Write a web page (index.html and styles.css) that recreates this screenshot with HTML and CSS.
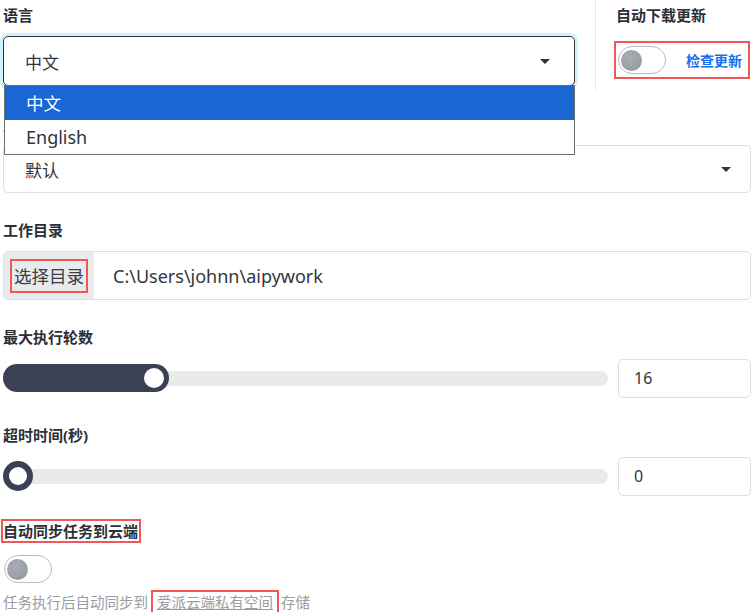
FILE: index.html
```html
<!DOCTYPE html>
<html lang="zh-CN">
<head>
    <meta charset="UTF-8">
    <meta name="viewport" content="width=device-width, initial-scale=1.0">
    <title>设置</title>
    <link rel="stylesheet" href="styles.css">
</head>
<body>
<div class="page">

    <div class="top-row">
        <div class="col-main">
            <div class="label">语言</div>
            <div class="select focused">
                <span>中文</span>
                <span class="caret"></span>
                <ul class="dropdown">
                    <li class="active">中文</li>
                    <li class="latin">English</li>
                </ul>
            </div>
        </div>
        <div class="col-side">
            <div class="label">自动下载更新</div>
            <div class="update-box">
                <span class="switch"><span class="knob"></span></span>
                <a class="check-link" href="#">检查更新</a>
            </div>
        </div>
    </div>

    <div class="field field-theme">
        <div class="label">主题</div>
        <div class="select select-sm">
            <span>默认</span>
            <span class="caret"></span>
        </div>
    </div>

    <div class="field">
        <div class="label">工作目录</div>
        <div class="input-group">
            <div class="addon"><span class="marked">选择目录</span></div>
            <div class="path">C:\Users\johnn\aipywork</div>
        </div>
    </div>

    <div class="field">
        <div class="label">最大执行轮数</div>
        <div class="slider-row">
            <div class="slider">
                <div class="track"></div>
                <div class="fill" style="width: 166px;"><span class="thumb"></span></div>
            </div>
            <div class="num-input">16</div>
        </div>
    </div>

    <div class="field">
        <div class="label">超时时间(秒)</div>
        <div class="slider-row">
            <div class="slider">
                <div class="track"></div>
                <div class="fill fill-min" style="width: 30px;"><span class="thumb"></span></div>
            </div>
            <div class="num-input">0</div>
        </div>
    </div>

    <div class="field field-sync">
        <div class="label"><span class="marked-title">自动同步任务到云端</span></div>
        <span class="switch"><span class="knob"></span></span>
        <p class="caption">任务执行后自动同步到<span class="marked-link"><a href="#">爱派云端私有空间</a></span>存储</p>
    </div>

</div>
</body>
</html>
```

FILE: styles.css
```css
html, body {
    margin: 0;
    padding: 0;
    background: #fff;
    overflow: hidden;
}
body {
    font-family: "Noto Sans", "Noto Sans CJK SC", sans-serif;
    color: #2f333a;
    padding-left: 3px;
}
.page {
    width: 748px;
}

.label {
    font-size: 15px;
    font-weight: bold;
    line-height: 20px;
    height: 20px;
    margin-bottom: 11px;
    color: #2b2f36;
}

/* верхняя строка: язык + обновления */
.top-row {
    display: flex;
    height: 90px;
}
.col-main {
    width: 592px;
    padding-top: 5px;
    box-sizing: border-box;
}
.col-side {
    flex: 1;
    border-left: 1px solid #e8e8ea;
    padding: 5px 0 0 20px;
}

.select {
    position: relative;
    display: flex;
    align-items: center;
    justify-content: space-between;
    width: 572px;
    height: 50px;
    box-sizing: border-box;
    padding: 0 24px 0 21px;
    border: 1px solid #dcdde0;
    border-radius: 5px;
    font-size: 17px;
    color: #33363c;
}
.select.focused {
    border-color: #2e3440;
    box-shadow: 0 0 0 3px #cdf3fc;
}
.select-sm {
    width: 100%;
    height: 48px;
    padding-right: 19px;
}
.caret {
    width: 0;
    height: 0;
    border-left: 5px solid transparent;
    border-right: 5px solid transparent;
    border-top: 5px solid #2f343c;
}

.dropdown {
    position: absolute;
    top: 48px;
    left: 0;
    right: -1px;
    margin: 0;
    padding: 0;
    list-style: none;
    background: #fff;
    border: 1px solid #6b6b6b;
    z-index: 10;
}
.dropdown li {
    height: 34px;
    line-height: 34px;
    padding-left: 21px;
    font-size: 17.5px;
    color: #2f333a;
}
.dropdown li.latin {
    font-size: 18px;
}
.dropdown li.active {
    background: #1a67d3;
    color: #fff;
}

.update-box {
    display: flex;
    align-items: center;
    justify-content: space-between;
    width: 128px;
    height: 30px;
    margin-top: 20px;
    margin-left: 2px;
    outline: 2px solid #f25757;
    outline-offset: 2px;
}
.check-link {
    color: #1570ef;
    font-size: 14px;
    font-weight: bold;
    text-decoration: none;
    margin-right: 4px;
}

.switch {
    display: flex;
    align-items: center;
    width: 48px;
    height: 28px;
    box-sizing: border-box;
    border: 1px solid #b9bcc3;
    border-radius: 14px;
    padding-left: 2px;
    background: #fff;
}
.knob {
    width: 21px;
    height: 21px;
    border-radius: 50%;
    background: radial-gradient(circle at 40% 35%, #a9acb3, #92959d);
}

.field {
    margin-top: 27px;
}
.field-theme {
    margin-top: 24px;
}

.input-group {
    display: flex;
    height: 49px;
    border: 1px solid #dcdde0;
    border-radius: 5px;
    box-sizing: border-box;
    overflow: hidden;
    font-size: 17px;
}
.addon {
    width: 90px;
    display: flex;
    align-items: center;
    justify-content: center;
    background: #e9eaee;
    color: #3a3e46;
}
.marked {
    outline: 2px solid #f25757;
    padding: 2px 2px 3px;
    font-size: 17.5px;
}
.path {
    display: flex;
    align-items: center;
    padding-left: 19px;
    font-size: 18px;
    color: #33363c;
}

.slider-row {
    display: flex;
    align-items: center;
    gap: 10px;
    height: 40px;
}
.slider {
    position: relative;
    flex: 1;
    height: 28px;
    display: flex;
    align-items: center;
}
.track {
    position: absolute;
    left: 0;
    right: 0;
    height: 15px;
    border-radius: 8px;
    background: #e9eaec;
}
.fill {
    position: relative;
    height: 28px;
    border-radius: 14px;
    background: #394152;
    display: flex;
    align-items: center;
    justify-content: flex-end;
    padding-right: 5px;
    box-sizing: border-box;
}
.fill-min {
    height: 30px;
    border-radius: 15px;
    padding-right: 6px;
}
.thumb {
    width: 20px;
    height: 20px;
    border-radius: 50%;
    background: #fff;
}
.fill-min .thumb {
    width: 18px;
    height: 18px;
}
.num-input {
    width: 133px;
    height: 39px;
    box-sizing: border-box;
    border: 1px solid #dcdde0;
    border-radius: 5px;
    padding-left: 15px;
    display: flex;
    align-items: center;
    font-size: 16px;
    color: #33363c;
}

.field-sync {
    margin-top: 25px;
}
.field-sync .label {
    margin-bottom: 14px;
}
.marked-title {
    outline: 2px solid #f25757;
    padding-right: 1px;
}
.field-sync .switch {
    margin-left: 1px;
}
.caption {
    margin: 9px 0 0;
    font-size: 14.5px;
    line-height: 20px;
    color: #9a9ca3;
}
.marked-link {
    outline: 2px solid #f25757;
    padding: 0 4px;
    margin: 0 4px 0 5px;
}
.marked-link a {
    color: #9a9ca3;
}
```
